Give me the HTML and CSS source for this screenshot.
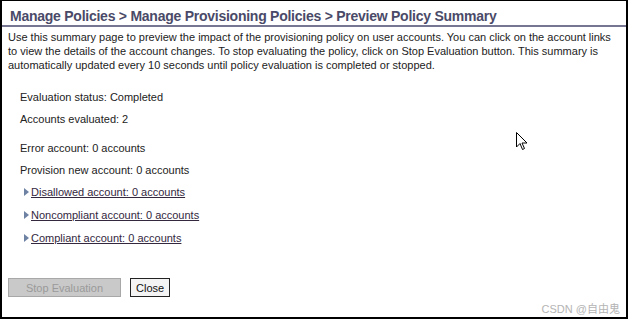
FILE: index.html
```html
<!DOCTYPE html>
<html lang="en">
<head>
    <meta charset="UTF-8">
    <title>Preview Policy Summary</title>
    <link rel="stylesheet" href="styles.css">
</head>
<body>
    <div class="frame">
        <h1 class="title">Manage Policies &gt; Manage Provisioning Policies &gt; Preview Policy Summary</h1>
        <p class="intro">Use this summary page to preview the impact of the provisioning policy on user accounts. You can click on the account links to view the details of the account changes. To stop evaluating the policy, click on Stop Evaluation button. This summary is automatically updated every 10 seconds until policy evaluation is completed or stopped.</p>

        <div class="summary">
            <div class="row">Evaluation status: Completed</div>
            <div class="row">Accounts evaluated: 2</div>
            <div class="row gap">Error account: 0 accounts</div>
            <div class="row">Provision new account: 0 accounts</div>
            <div class="row link-row"><span class="arrow"></span><a href="#">Disallowed account: 0 accounts</a></div>
            <div class="row link-row"><span class="arrow"></span><a href="#">Noncompliant account: 0 accounts</a></div>
            <div class="row link-row"><span class="arrow"></span><a href="#">Compliant account: 0 accounts</a></div>
        </div>

        <div class="buttons">
            <button class="btn disabled" disabled>Stop Evaluation</button>
            <button class="btn">Close</button>
        </div>

        <div class="watermark">CSDN @自由鬼</div>

        <!-- mouse pointer left in the screenshot -->
        <svg class="cursor" width="12" height="19" viewBox="0 0 12 19">
            <path d="M0.5 0.5 L0.5 15 L4 11.5 L6.5 17.5 L8.5 16.5 L6 11 L11 11 Z" fill="#fff" stroke="#000" stroke-width="1"/>
        </svg>
    </div>
</body>
</html>
```

FILE: styles.css
```css
body {
    margin: 0;
    font-family: 'Liberation Sans', Arial, sans-serif;
    background: #fff;
}
.frame {
    position: relative;
    width: 628px;
    height: 319px;
    box-sizing: border-box;
    border: 2px solid #000;
    border-top-width: 1px;
    overflow: hidden;
}
.title {
    margin: 0;
    padding: 7px 0 1px 8px;
    font-size: 14px;
    font-weight: bold;
    letter-spacing: -0.25px;
    line-height: 16px;
    color: #4a4a68;
    border-bottom: 2px solid #767692;
}
.intro {
    margin: 0;
    padding: 3px 8px 0 6px;
    font-size: 11px;
    line-height: 14px;
    color: #222;
}
.summary {
    padding: 18px 0 0 18px;
    font-size: 11px;
    color: #222;
}
.row {
    line-height: 14px;
    margin-bottom: 8px;
}
.row:nth-child(2) {
    margin-bottom: 15px;
}
.row.gap {
    margin-bottom: 8px;
}
.link-row {
    display: flex;
    align-items: center;
    margin-bottom: 9px;
}
.arrow {
    width: 0;
    height: 0;
    margin: 0 2px 0 4px;
    border-left: 5px solid #6e82a4;
    border-top: 4.5px solid transparent;
    border-bottom: 4.5px solid transparent;
}
.link-row a {
    color: #33283e;
    text-decoration: underline;
}
.buttons {
    display: flex;
    gap: 9px;
    padding: 24px 0 0 6px;
}
.btn {
    font-family: 'Liberation Sans', Arial, sans-serif;
    font-size: 11px;
    height: 19px;
    padding: 0 5px;
    background: #f4f4f4;
    border: 1px solid #222;
    color: #111;
}
.btn.disabled {
    width: 113px;
    background: #c9c9c9;
    border: 1px solid #a8a8a8;
    color: #9a9a9a;
}
.watermark {
    position: absolute;
    right: 6px;
    bottom: 1px;
    font-family: 'Liberation Sans', 'Noto Sans CJK SC', sans-serif;
    font-size: 11px;
    color: #b4b4b4;
}
.cursor {
    position: absolute;
    left: 514px;
    top: 131px;
}
```
